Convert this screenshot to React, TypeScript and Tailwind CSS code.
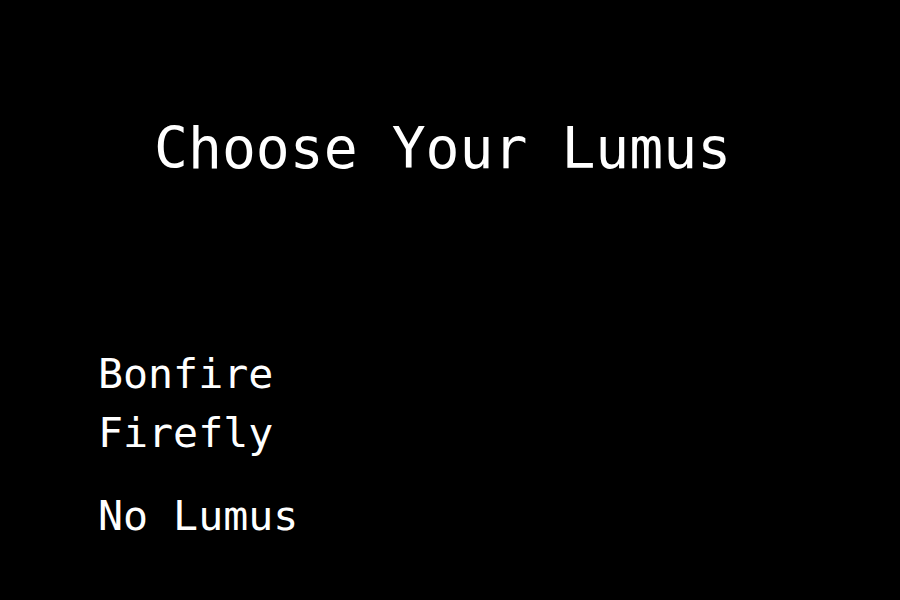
export default function App() {
  const options = ['Bonfire', 'Firefly'];

  return (
    <div className="w-[900px] h-[600px] bg-black text-white overflow-hidden font-['DejaVu_Sans_Mono',monospace]">
      <div className="pt-[117px] pl-[154px]">
        <h1 className="text-[56.4px] leading-[64px] font-normal">Choose Your Lumus</h1>
      </div>

      <div className="mt-[163px] pl-[98px] flex flex-col">
        {options.map((name) => (
          <span key={name} className="text-[41.6px] leading-[59px]">
            {name}
          </span>
        ))}
        <span className="mt-[24px] text-[41.6px] leading-[59px]">No Lumus</span>
      </div>
    </div>
  );
}
